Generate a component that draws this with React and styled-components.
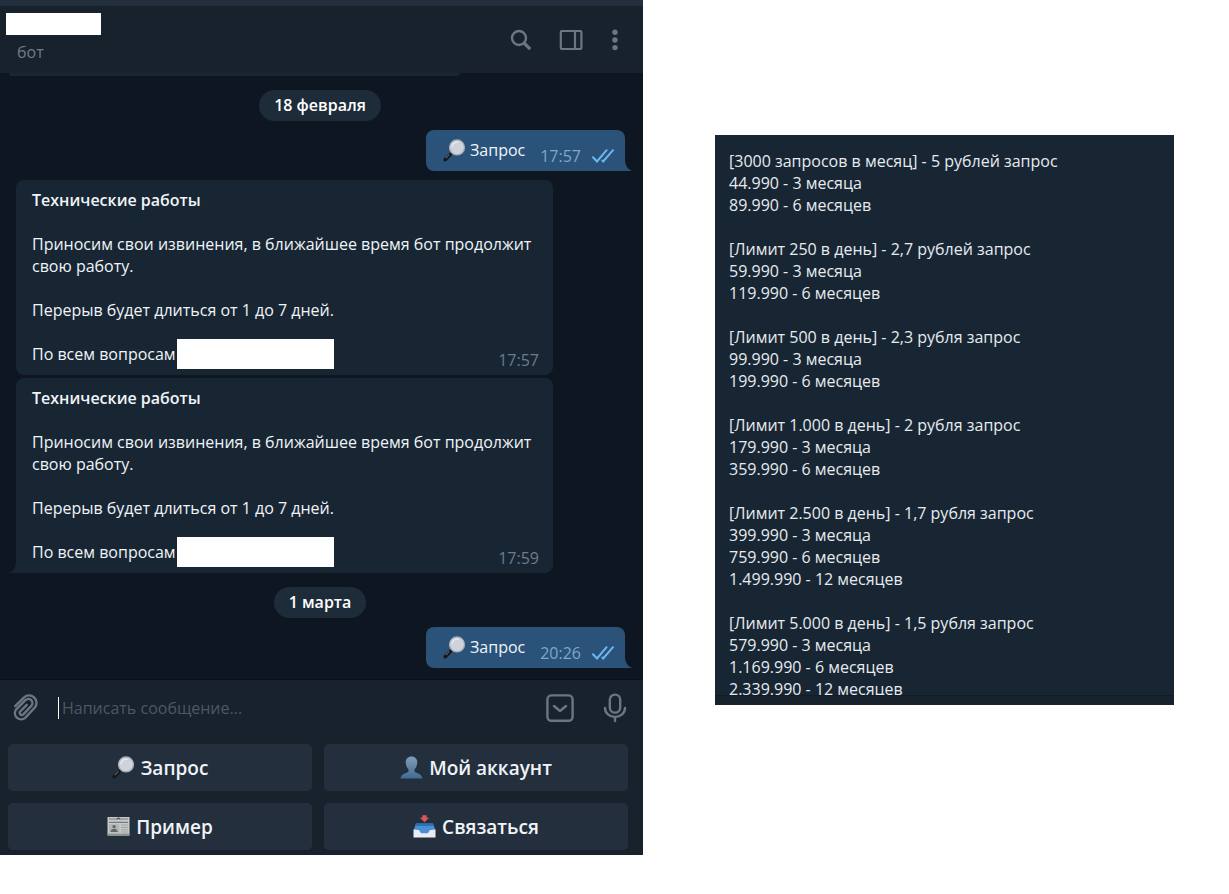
import React, {useState} from 'react';
import styled, {createGlobalStyle} from 'styled-components';

const GlobalStyle = createGlobalStyle`
    * {
        box-sizing: border-box;
    }
    body {
        margin: 0;
        background: #ffffff;
        font-family: 'Open Sans', 'Noto Sans', sans-serif;
        font-size: 16px;
        line-height: 22px;
    }
    button, input {
        font-family: inherit;
    }
    svg {
        display: block;
        flex: none;
    }
`;

const Page = styled.div`
    display: grid;
    grid-template-columns: 643fr 586fr;
    align-items: start;
`;

/* ---------- chat ---------- */

const Chat = styled.main`
    background: #0e1621;
    color: #f0f4f8;
    min-width: 0;
`;

const Header = styled.header`
    display: flex;
    justify-content: space-between;
    background: #18222c;
    border-top: 6px solid #242f3e;
    padding: 7px 22px 10px 6px;
`;

const Title = styled.div`
    display: flex;
    flex-direction: column;
    gap: 6px;
`;

const Blank = styled.span`
    display: block;
    flex: none;
    background: #ffffff;
    width: ${props => props.$width}px;
    height: ${props => props.$height}px;
`;

const Status = styled.span`
    color: #6d7b8b;
    padding-left: 11px;
`;

const HeaderActions = styled.div`
    display: flex;
    align-items: center;
    gap: 26px;
    padding-top: 4px;
`;

const IconButton = styled.button`
    display: flex;
    padding: 0;
    border: 0;
    background: none;
    color: #6c7680;
    cursor: pointer;
`;

const History = styled.section`
    display: flex;
    flex-direction: column;
    padding-bottom: 12px;
`;

const PreviousMessage = styled.div`
    height: 3px;
    width: 70%;
    margin-left: 10px;
    background: #182633;
    border-radius: 0 0 8px 0;
`;

const DatePill = styled.time`
    align-self: center;
    margin: 14px 3px 9px 0;
    padding: 4px 15px 5px;
    border-radius: 16px;
    background: #1e2c3a;
    color: #ffffff;
    font-weight: 600;
`;

const Outgoing = styled.article`
    position: relative;
    align-self: flex-end;
    display: flex;
    align-items: flex-start;
    margin-right: 18px;
    padding: 9px 11px 10px 17px;
    border-radius: 8px 8px 0 8px;
    background: #2b5278;
`;

const OutgoingText = styled.span`
    display: flex;
    align-items: center;
    gap: 4px;
    height: 22px;
    margin-right: 15px;
`;

const Meta = styled.time`
    display: flex;
    align-items: center;
    gap: 11px;
    color: ${props => props.$own ? '#7da8d3' : '#6d7b8b'};
    ${props => props.$own ? 'margin: 6px 0 -6px;' : ''}
`;

const Tail = styled.svg`
    position: absolute;
    bottom: 0;
    ${props => props.$left ? 'right: 100%;' : 'left: 100%;'}
`;

const Incoming = styled.article`
    position: relative;
    margin: ${props => props.$first ? '9px' : '3px'} 90px 0 16px;
    padding: 9px 14px 10px 16px;
    border-radius: ${props => props.$first ? '8px' : '8px 8px 8px 0'};
    background: #182633;

    h2 {
        margin: 0 0 22px;
        font-size: 16px;
        font-weight: 600;
        line-height: 22px;
    }
    p {
        margin: 0 0 22px;
    }
`;

const LastLine = styled.div`
    display: flex;
    align-items: center;
    gap: 1px;
    height: 22px;

    time {
        margin: 12px 0 0 auto;
    }
`;

const Composer = styled.form`
    display: flex;
    align-items: center;
    height: 56px;
    padding: 0 16px 0 12px;
    background: #18222c;
    box-shadow: 0 -1px 0 #0a111a;
`;

const MessageInput = styled.input`
    flex: 1;
    min-width: 0;
    height: 22px;
    margin: 0 8px 0 19px;
    padding: 0 0 0 3px;
    border: 0;
    border-left: 1px solid #ffffff;
    outline: 0;
    background: none;
    color: #f0f4f8;
    font-size: 16px;

    &::placeholder {
        color: #4d5763;
        opacity: 1;
    }
`;

const ComposerActions = styled.div`
    display: flex;
    align-items: center;
    gap: 29px;
`;

const Keyboard = styled.div`
    display: grid;
    grid-template-columns: 1fr 1fr;
    gap: 12px;
    padding: 8px 15px 5px 8px;
    background: #18222c;
`;

const KeyButton = styled.button`
    display: flex;
    align-items: center;
    justify-content: center;
    gap: 6px;
    height: 47px;
    border: 0;
    border-radius: 5px;
    background: #242f3d;
    color: #f0f4f8;
    font-size: 19px;
    font-weight: 600;
    cursor: pointer;
`;

/* ---------- prices ---------- */

const Prices = styled.aside`
    margin: 135px 55px 0 72px;
    background: #182633;
    color: #e6ebf0;
`;

const PriceList = styled.div`
    display: flex;
    flex-direction: column;
    gap: 22px;
    padding: 15px 14px 0;
`;

const Plan = styled.section`
    h3 {
        margin: 0;
        font-size: 16px;
        font-weight: 400;
        line-height: 22px;
    }
    ul {
        margin: 0;
        padding: 0;
        list-style: none;
    }
`;

// covers the bottom of the last row, like a list scrolled under it
const PricesFooter = styled.div`
    position: relative;
    height: 10px;
    margin-top: -5px;
    border-top: 1px solid #121c26;
    background: #18222c;
`;

/* ---------- icons ---------- */

const SearchIcon = () => (
    <svg width="24" height="24" viewBox="0 0 24 24" fill="none" stroke="currentColor" strokeWidth="2.4">
        <circle cx="10" cy="10" r="7" />
        <path d="M15 15l6.2 6.2" strokeWidth="3.2" />
    </svg>
);

const SidebarIcon = () => (
    <svg width="24" height="24" viewBox="0 0 24 24" fill="none" stroke="currentColor" strokeWidth="2.2">
        <rect x="1.8" y="3" width="20.6" height="18" rx="1" />
        <path d="M16 3v18" />
    </svg>
);

const MoreIcon = () => (
    <svg width="12" height="24" viewBox="0 0 12 24" fill="currentColor">
        <circle cx="6" cy="4.2" r="2.7" />
        <circle cx="6" cy="12" r="2.7" />
        <circle cx="6" cy="19.6" r="2.7" />
    </svg>
);

const ClipIcon = () => (
    <svg width="27" height="30" viewBox="0 0 27 30" fill="none" stroke="currentColor" strokeWidth="2.4" strokeLinecap="round">
        <path d="M3.2 13.2 L11.6 4.8 A7.4 7.4 0 0 1 22.6 14.8 L13.2 24.9 A6.3 6.3 0 0 1 3.8 16.8 L13.4 7.2 A4.1 4.1 0 0 1 19.3 12.9 L11.3 21.3 A2 2 0 0 1 8.2 18.5 L14.8 11.8" />
    </svg>
);

const KeyboardIcon = () => (
    <svg width="28" height="28" viewBox="0 0 28 28" fill="none" stroke="currentColor" strokeWidth="2.4" strokeLinecap="round" strokeLinejoin="round">
        <rect x="1.4" y="1.4" width="25.2" height="25.4" rx="4" />
        <path d="M8 12l6 5 6-5" />
    </svg>
);

const MicIcon = () => (
    <svg width="24" height="30" viewBox="0 0 24 30" fill="none" stroke="currentColor" strokeWidth="2.4" strokeLinecap="round">
        <rect x="6.8" y="1.6" width="10.4" height="18" rx="5.2" />
        <path d="M2 15a10 9 0 0 0 20 0M12 24v4" />
    </svg>
);

const ChecksIcon = () => (
    <svg width="22" height="14" viewBox="0 0 22 14" fill="none" stroke="#6cb6f5" strokeWidth="2" strokeLinecap="round">
        <path d="M1 8.2l4 4.3L14.6 1.2M10.4 11.6l.8.9L21 1.2" />
    </svg>
);

const LensIcon = () => (
    <svg width="23" height="23" viewBox="0 0 23 23">
        <path d="M10 13l-4 4" stroke="#8f9498" strokeWidth="2.2" />
        <path d="M7.6 15.2l-5.4 5.6" stroke="#14171a" strokeWidth="3.4" strokeLinecap="round" />
        <path d="M6.4 15.4l-3.6 3.8" stroke="#5c6167" strokeWidth="1.2" />
        <circle cx="14" cy="8.4" r="7.5" fill="#ced2da" stroke="#a6abb2" strokeWidth="1.2" />
        <path d="M8.8 8a5.6 5.6 0 0 1 6.8-4.8" fill="none" stroke="#e6e9ef" strokeWidth="1.4" />
    </svg>
);

const PersonIcon = () => (
    <svg width="23" height="23" viewBox="0 0 23 23">
        <defs>
            <linearGradient id="person" x1="0" y1="0" x2="0" y2="1">
                <stop offset="0" stopColor="#809db6" />
                <stop offset="1" stopColor="#416b93" />
            </linearGradient>
        </defs>
        <path fill="url(#person)" d="M11.5.5c-3.8 0-6 2.7-5.8 6.2.2 3 1.5 5.2 2.8 6.6v2.2c-.6 1.8-7.2 1.4-8 7h22c-.8-5.600-7.400-5.200-8-7v-2.200c1.300-1.400 2.600-3.600 2.800-6.600.2-3.500-2-6.200-5.800-6.200z" />
    </svg>
);

const NewsIcon = () => (
    <svg width="23" height="23" viewBox="0 0 23 23">
        <path fill="#c7c9c8" d="M.5 2h22v18H.5z" />
        <path fill="#8d9190" d="M.5 18.6h22V21H.5z" />
        <path d="M2 4h7M14 4h7M2 7.300h19" stroke="#777c7c" strokeWidth="1.2" />
        <path d="M9.500 4.400l2-1.400 2 1.400" fill="none" stroke="#4d5252" strokeWidth="1.3" />
        <path fill="#b1b5b5" d="M2 9.200h10.300v8.200H2z" />
        <circle cx="7.1" cy="11.6" r="1.7" fill="#626969" />
        <path fill="#626969" d="M3.500 17q.4-3.200 3.600-3.200t3.600 3.200z" />
        <path d="M14 10h7M14 12.400h7M14 14.800h7M14 17h7" stroke="#a0a4a4" strokeWidth="1" />
    </svg>
);

const InboxIcon = () => (
    <svg width="23" height="23" viewBox="0 0 23 23">
        <path fill="#4a8fd6" d="M3 8.500h17l2.400 7-5 4H5.600l-5-4z" />
        <path fill="#2f6fb5" d="M3 8.500h17l.8 2.400H2.200z" />
        <path fill="#e9edf0" d="M.5 14.500l5.200.4c1 0 1.500 3.300 3 3.300h5.600c1.500 0 2-3.300 3-3.300l5.200-.4v8H.5z" />
        <path fill="#d9575c" d="M9.300.3h4.400v2.500h2.500l-4.700 4.500-4.700-4.500h2.500z" />
    </svg>
);

/* ---------- content ---------- */

const plans = [
    {title: '[3000 запросов в месяц] - 5 рублей запрос', rows: ['44.990 - 3 месяца', '89.990 - 6 месяцев']},
    {title: '[Лимит 250 в день] - 2,7 рублей запрос', rows: ['59.990 - 3 месяца', '119.990 - 6 месяцев']},
    {title: '[Лимит 500 в день] - 2,3 рубля запрос', rows: ['99.990 - 3 месяца', '199.990 - 6 месяцев']},
    {title: '[Лимит 1.000 в день] - 2 рубля запрос', rows: ['179.990 - 3 месяца', '359.990 - 6 месяцев']},
    {title: '[Лимит 2.500 в день] - 1,7 рубля запрос', rows: ['399.990 - 3 месяца', '759.990 - 6 месяцев', '1.499.990 - 12 месяцев']},
    {title: '[Лимит 5.000 в день] - 1,5 рубля запрос', rows: ['579.990 - 3 месяца', '1.169.990 - 6 месяцев', '2.339.990 - 12 месяцев']},
];

const keys = [
    {label: 'Запрос', Icon: LensIcon},
    {label: 'Мой аккаунт', Icon: PersonIcon},
    {label: 'Пример', Icon: NewsIcon},
    {label: 'Связаться', Icon: InboxIcon},
];

const Request = ({time}) => (
    <Outgoing>
        <OutgoingText><LensIcon />Запрос</OutgoingText>
        <Meta $own>{time}<ChecksIcon /></Meta>
        <Tail width="7" height="12" viewBox="0 0 7 12">
            <path fill="#2b5278" d="M0 0c0 6 2 9.500 7 12H0z" />
        </Tail>
    </Outgoing>
);

const Notice = ({time, first}) => (
    <Incoming $first={first}>
        <h2>Технические работы</h2>
        <p>Приносим свои извинения, в ближайшее время бот продолжит свою работу.</p>
        <p>Перерыв будет длиться от 1 до 7 дней.</p>
        <LastLine>
            <span>По всем вопросам</span>
            <Blank $width={157} $height={30} />
            <Meta>{time}</Meta>
        </LastLine>
        {!first && (
            <Tail $left width="7" height="12" viewBox="0 0 7 12">
                <path fill="#182633" d="M7 0c0 6-2 9.500-7 12h7z" />
            </Tail>
        )}
    </Incoming>
);

const App = () => {
    const [message, setMessage] = useState('');

    const handleSubmit = e => {
        e.preventDefault();
        setMessage('');
    };

    return (
        <Page>
            <GlobalStyle />
            <Chat>
                <Header>
                    <Title>
                        <Blank $width={95} $height={22} />
                        <Status>бот</Status>
                    </Title>
                    <HeaderActions>
                        <IconButton aria-label="Поиск"><SearchIcon /></IconButton>
                        <IconButton aria-label="Боковая панель"><SidebarIcon /></IconButton>
                        <IconButton aria-label="Меню"><MoreIcon /></IconButton>
                    </HeaderActions>
                </Header>

                <History>
                    <PreviousMessage />
                    <DatePill>18 февраля</DatePill>
                    <Request time="17:57" />
                    <Notice time="17:57" first />
                    <Notice time="17:59" />
                    <DatePill>1 марта</DatePill>
                    <Request time="20:26" />
                </History>

                <Composer onSubmit={handleSubmit}>
                    <IconButton type="button" aria-label="Прикрепить"><ClipIcon /></IconButton>
                    <MessageInput
                        type="text"
                        aria-label="Сообщение"
                        placeholder="Написать сообщение..."
                        value={message}
                        onChange={e => setMessage(e.target.value)}
                    />
                    <ComposerActions>
                        <IconButton type="button" aria-label="Клавиатура"><KeyboardIcon /></IconButton>
                        <IconButton type="button" aria-label="Голосовое сообщение"><MicIcon /></IconButton>
                    </ComposerActions>
                </Composer>

                <Keyboard>
                    {keys.map(({label, Icon}) => (
                        <KeyButton key={label} type="button"><Icon />{label}</KeyButton>
                    ))}
                </Keyboard>
            </Chat>

            <Prices>
                <PriceList>
                    {plans.map(plan => (
                        <Plan key={plan.title}>
                            <h3>{plan.title}</h3>
                            <ul>
                                {plan.rows.map(row => <li key={row}>{row}</li>)}
                            </ul>
                        </Plan>
                    ))}
                </PriceList>
                <PricesFooter />
            </Prices>
        </Page>
    );
};

export default App;
